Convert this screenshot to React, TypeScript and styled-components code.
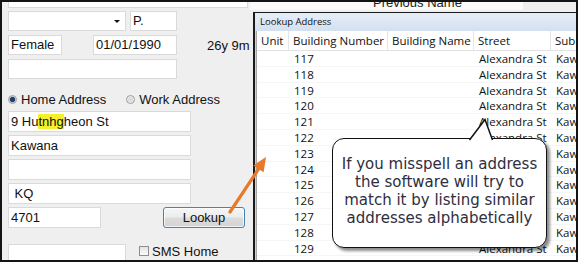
import styled, { createGlobalStyle } from 'styled-components';

const GlobalStyle = createGlobalStyle`
  html, body {
    margin: 0;
    padding: 0;
    background: #ffffff;
  }
`;

const Screen = styled.div`
  position: relative;
  width: 578px;
  height: 262px;
  box-sizing: border-box;
  border: 2px solid #141414;
  background: #efefef;
  display: flex;
  overflow: hidden;
  font-family: "Liberation Sans", Arial, sans-serif;
  font-size: 13px;
  color: #111;
`;

/* ---------- left form ---------- */

const FormPane = styled.div`
  width: 246px;
  flex-shrink: 0;
  box-sizing: border-box;
  padding-left: 6px;
  display: flex;
  flex-direction: column;
`;

const Row = styled.div<{ $top: number; $gap?: number }>`
  display: flex;
  align-items: center;
  margin-top: ${p => p.$top}px;
  gap: ${p => p.$gap ?? 0}px;
`;

const Field = styled.div<{ $w: number; $h?: number }>`
  width: ${p => p.$w}px;
  height: ${p => p.$h ?? 20}px;
  box-sizing: border-box;
  flex-shrink: 0;
  background: #fff;
  border: 1px solid #dadada;
  padding-left: 2px;
  line-height: ${p => (p.$h ?? 20) - 2}px;
  white-space: nowrap;
  overflow: hidden;
`;

const Combo = styled(Field)`
  display: flex;
  align-items: center;
  justify-content: flex-end;
  padding-right: 5px;
`;

const Caret = styled.span`
  width: 0;
  height: 0;
  border-left: 3px solid transparent;
  border-right: 3px solid transparent;
  border-top: 3px solid #111;
`;

const Age = styled.span`
  margin-left: -1px;
  white-space: nowrap;
`;

const RadioLabel = styled.label`
  display: flex;
  align-items: center;
  gap: 4px;
  height: 16px;
  white-space: nowrap;
`;

const RadioDot = styled.span<{ $on?: boolean }>`
  width: 9px;
  height: 9px;
  box-sizing: border-box;
  border-radius: 50%;
  border: 1px solid #9a9a9a;
  background: ${p =>
    p.$on
      ? 'radial-gradient(circle, #1f3f66 0 2.2px, #7a95b4 2.6px, #e9eef4 3.4px)'
      : 'radial-gradient(circle, #dcdcdc 0 2px, #f4f4f4 3.5px)'};
`;

const AddressStack = styled.div`
  display: flex;
  flex-direction: column;
  gap: 3px;
  margin-top: 4px;
`;

const Mark = styled.span`
  background: #f5f02c;
`;

const Button = styled.div`
  width: 82px;
  height: 21px;
  margin-left: 62px;
  box-sizing: border-box;
  border: 1px solid #3f86bf;
  border-radius: 3px;
  background: linear-gradient(#f6f6f6 0%, #ececec 48%, #dcdcdc 52%, #d3d3d3 100%);
  box-shadow: inset 0 0 0 1px rgba(255, 255, 255, 0.7);
  text-align: center;
  line-height: 19px;
`;

const CheckRow = styled.div`
  display: flex;
  align-items: flex-start;
  margin-top: 16px;
`;

const CheckBox = styled.span`
  width: 10px;
  height: 10px;
  box-sizing: border-box;
  margin: 2px 3px 0 13px;
  border: 1px solid #8e8e8e;
  background: linear-gradient(#e4e4e4, #fbfbfb);
`;

const CheckText = styled.span`
  line-height: 15px;
  white-space: nowrap;
`;

/* ---------- right side ---------- */

const RightPane = styled.div`
  flex: 1;
  min-width: 0;
  display: flex;
  flex-direction: column;
`;

const PrevBar = styled.div`
  width: 273px;
  height: 8px;
  margin-left: 2px;
  background: #fbfbfb;
  overflow: hidden;
  padding-left: 123px;
  box-sizing: border-box;
`;

const PrevText = styled.div`
  margin-top: -6px;
  line-height: 13px;
  color: #1c1c1c;
  white-space: nowrap;
`;

const Window = styled.div`
  flex: 1;
  margin: 2px 0 0 5px;
  border-left: 2px solid #1a1a1a;
  border-top: 1px solid #1a1a1a;
  background: #c5d3e4;
  display: flex;
  flex-direction: column;
  min-height: 0;
`;

const TitleBar = styled.div`
  height: 18px;
  flex-shrink: 0;
  padding-left: 5px;
  background: linear-gradient(#e6eef8, #d4e0ef);
  font-family: "Open Sans", "Noto Sans", sans-serif;
  font-size: 9.5px;
  line-height: 18px;
  color: #111;
`;

const ListView = styled.div`
  flex: 1;
  margin-left: 1px;
  border-left: 1px solid #a6a6a6;
  background: #fff;
  overflow: hidden;
  font-family: "Open Sans", "Noto Sans", sans-serif;
  font-size: 11.5px;
  color: #111;
`;

const GridRow = styled.div<{ $head?: boolean }>`
  display: grid;
  grid-template-columns: 32px 99px 86px 77px 1fr;
  height: ${p => (p.$head ? '20px' : '15.8px')};
  line-height: ${p => (p.$head ? '20px' : '15.8px')};
  box-sizing: border-box;
  border-bottom: 1px solid ${p => (p.$head ? '#e2e2e2' : '#f6f6f6')};
`;

const Cell = styled.div<{ $head?: boolean }>`
  padding-left: ${p => (p.$head ? 4 : 5)}px;
  white-space: nowrap;
  border-right: 1px solid ${p => (p.$head ? '#e4e4e4' : 'transparent')};
`;

/* ---------- overlays ---------- */

const Overlay = styled.svg`
  position: absolute;
  left: -2px;
  top: -2px;
  pointer-events: none;
`;

const Callout = styled.div`
  position: absolute;
  left: 330px;
  top: 136px;
  width: 215px;
  height: 110px;
  box-sizing: border-box;
  padding-bottom: 4px;
  border: 1.5px solid #111;
  border-radius: 12px;
  background: #fff;
  box-shadow: 3px 3px 3px rgba(0, 0, 0, 0.45);
  display: flex;
  align-items: center;
  justify-content: center;
  text-align: center;
  font-family: "DejaVu Sans", Verdana, sans-serif;
  font-size: 15px;
  line-height: 18px;
  color: #2e2e40;
`;

const Tail = styled.svg`
  position: absolute;
  left: 135px;
  top: -21.5px;
`;

const rows = Array.from({ length: 13 }, (_, i) => 117 + i);

export default function App() {
  return (
    <>
      <GlobalStyle />
      <Screen>
        <FormPane>
          <Row $top={-14}>
            <Field $w={240} />
          </Row>
          <Row $top={3} $gap={4}>
            <Combo $w={118}>
              <Caret />
            </Combo>
            <Field $w={47}>P.</Field>
          </Row>
          <Row $top={4} $gap={31}>
            <Field $w={54}>Female</Field>
            <Field $w={84}>01/01/1990</Field>
            <Age>26y 9m</Age>
          </Row>
          <Row $top={4}>
            <Field $w={169} />
          </Row>
          <Row $top={12} $gap={20}>
            <RadioLabel>
              <RadioDot $on />
              Home Address
            </RadioLabel>
            <RadioLabel>
              <RadioDot />
              Work Address
            </RadioLabel>
          </Row>
          <AddressStack>
            <Field $w={183} $h={21}>
              9 Hu<Mark>tnhg</Mark>heon St
            </Field>
            <Field $w={183} $h={21}>Kawana</Field>
            <Field $w={183} $h={21} />
            <Field $w={183} $h={21}>&nbsp;KQ</Field>
          </AddressStack>
          <Row $top={3}>
            <Field $w={93} $h={21}>4701</Field>
            <Button>Lookup</Button>
          </Row>
          <CheckRow>
            <Field $w={118} />
            <CheckBox />
            <CheckText>SMS Home</CheckText>
          </CheckRow>
        </FormPane>

        <RightPane>
          <PrevBar>
            <PrevText>Previous Name</PrevText>
          </PrevBar>
          <Window>
            <TitleBar>Lookup Address</TitleBar>
            <ListView>
              <GridRow $head>
                <Cell $head>Unit</Cell>
                <Cell $head>Building Number</Cell>
                <Cell $head>Building Name</Cell>
                <Cell $head>Street</Cell>
                <Cell $head>Suburb</Cell>
              </GridRow>
              {rows.map(n => (
                <GridRow key={n}>
                  <Cell />
                  <Cell>{n}</Cell>
                  <Cell />
                  <Cell>Alexandra St</Cell>
                  <Cell>Kawana</Cell>
                </GridRow>
              ))}
            </ListView>
          </Window>
        </RightPane>

        <Overlay width={578} height={262} viewBox="0 0 578 262">
          <line x1={230} y1={212} x2={258.5} y2={169} stroke="#e8782a" strokeWidth={3.2} strokeLinecap="round" />
          <polygon points="266,157 263.6,172.2 253.4,165.5" fill="#e8782a" />
        </Overlay>

        <Callout>
          <Tail width={27} height={25} viewBox="0 0 27 25">
            <rect x={3} y={19} width={20} height={5} fill="#fff" />
            <path d="M1.5,22 L17,1.5 L24.5,22" fill="#fff" stroke="#111" strokeWidth={1.5} />
          </Tail>
          <div>
            If you misspell an address
            <br />
            the software will try to
            <br />
            match it by listing similar
            <br />
            addresses alphabetically
          </div>
        </Callout>
      </Screen>
    </>
  );
}
